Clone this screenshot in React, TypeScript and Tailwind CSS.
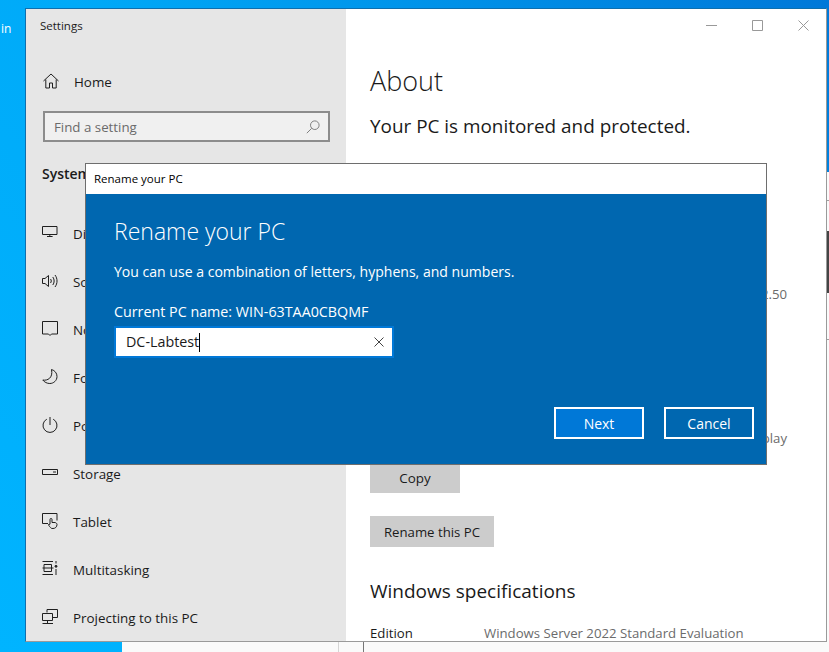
const Ico = ({ children, w = 16, h = 16 }: { children: React.ReactNode; w?: number; h?: number }) => (
  <svg width={w} height={h} viewBox="0 0 16 16" fill="none" stroke="#1f1f1f" strokeWidth="1" className="shrink-0">
    {children}
  </svg>
);

const icons: Record<string, React.ReactNode> = {
  Display: <Ico><path d="M.5 1.500h14.500v8H.5zM7.800 9.500v2M5 11.500h5.600" /></Ico>,
  Sound: <Ico><path d="M.5 5.500H3L6.500 2.500v11L3 10.500H.5zM8.500 6c1 1.200 1 2.800 0 4M10.800 4c1.800 2.400 1.800 5.600 0 8M13 2c2.700 3.600 2.700 8.400 0 12" /></Ico>,
  Notifications: <Ico><path d="M.5.500h15V13H9.500L8 14.500 6.500 13H.5z" /></Ico>,
  "Focus assist": <Ico><path d="M9.500.500c3.500 1 5.500 3.800 5.500 7 0 4-3.300 7-7.200 7-2.800 0-5.400-1.300-7-3.500 4.500 1 10.500-2 8.700-10.500z" /></Ico>,
  "Power & sleep": <Ico><path d="M8 0v8M4.800 2.200a7 7 0 1 0 6.400 0" /></Ico>,
  Storage: <Ico><path d="M.5 4.500h15v5h-15zM11 7h3" /></Ico>,
  Tablet: <Ico><path d="M6 10.500H.5V.5h14.500v7M8.500 14.500c-1-1-2-2.200-2-3l1.500-.3V6.500a1 1 0 0 1 2 0v3h3c1 .2 2 1 2 2 0 2.500-1.800 4-4 4s-2-.5-2.500-1z" /></Ico>,
  Multitasking: <Ico><path d="M.5.500h10.500M.5 13.500h10.500M2 3.500h7.500v7H2zM.5 7h11M14 0v2.500M14 8v6" /><circle cx="14" cy="5.300" r="1" fill="#1f1f1f" /></Ico>,
  "Projecting to this PC": <Ico><path d="M5 3.500v-3h10.500v8H11M.5 4.500h10v7H.5zM5.500 11.500v2.500M.5 14.500h10.500" /></Ico>,
};

const specs: [string, string][] = [
  ["Device name", "WIN-63TAA0CBQMF"],
  ["Processor", "Intel(R) Xeon(R) CPU E5-2680 v3 @ 2.50GHz   2.50"],
  ["", "GHz"],
  ["Installed RAM", "4.00 GB"],
  ["Device ID", "7C1E52A4-7B6E-4A6B-8D0B-6F11B1CE6A1C"],
  ["Product ID", "00454-40000-00001-AA081"],
  ["System type", "64-bit operating system, x64-based processor"],
  ["Pen and touch", "No pen or touch input is available for this display"],
];

export default function App() {
  return (
    <div className="relative w-[829px] h-[652px] overflow-hidden bg-[linear-gradient(50deg,#00b4ff_0%,#00aaf8_45%,#0078d8_100%)] font-['Open_Sans','Noto_Sans',sans-serif] text-[#1a1a1a]">
      <div className="absolute left-[1px] top-[21px] text-[12px] leading-4 text-white">in</div>

      {/* window behind */}
      <div className="absolute left-[122px] top-[172px] w-[800px] h-[500px] bg-[#fafafa]">
        <div className="absolute left-[216px] top-[469px] h-[20px] w-px bg-[#d5d5d5]" />
        <div className="absolute left-[241px] top-[469px] h-[20px] w-px bg-[#767676]" />
        <div className="absolute left-[704px] top-[28px] h-px w-[10px] bg-[#a0a0a0]" />
        <div className="absolute left-[704px] top-[59px] h-[62px] w-[10px] bg-[#444444]" />
        <div className="absolute left-[704px] top-[167px] h-px w-[10px] bg-[#a0a0a0]" />
      </div>

      {/* settings window */}
      <div className="absolute left-[25px] top-[8px] w-[802px] h-[634px] flex border border-[#0e6fae] border-b-[#9a9a9a] border-r-[#9a9a9a] overflow-hidden">
        <aside className="w-[320px] shrink-0 bg-[#e6e6e6] flex flex-col">
          <div className="h-[33px] pl-[14px] pt-[9px] text-[11.500px] leading-4">Settings</div>
          <div className="h-[48px] mt-[17px] flex items-center pl-[17px] gap-[15px] text-[13.400px]">
            <Ico><path d="M.5 8 8 1l7.500 7M2.800 6.500v8.500h3.700v-5h3v5h3.700V6.500" /></Ico>
            <span className="mt-[2px]">Home</span>
          </div>
          <div className="mt-[7px] ml-[17px] mr-[16px] h-[32px] border-2 border-[#8c8c8c] bg-[#f0f0f0] flex items-center justify-between pl-[9px] pr-[8px] text-[13.300px] text-[#6b6b6b]">
            <span className="mt-[2px]">Find a setting</span>
            <svg width="14" height="14" viewBox="0 0 14 14" fill="none" stroke="#808080"><circle cx="8.800" cy="5.200" r="4.300" /><path d="M5.700 8.300.8 13.200" /></svg>
          </div>
          <div className="mt-[21px] pl-[16px] h-[22px] text-[14px] leading-[22px] font-semibold">System</div>
          <nav className="mt-[24px] flex flex-col">
            {Object.keys(icons).map((k) => (
              <div key={k} className="h-[48px] shrink-0 flex items-center pl-[16px] gap-[15px] text-[13.400px]">
                {icons[k]}
                <span className="mt-[2px]">{k}</span>
              </div>
            ))}
          </nav>
        </aside>

        <main className="flex-1 min-w-0 bg-white relative pl-[24px]">
          <div className="absolute right-[17px] top-[11px] flex items-center gap-[35px]">
            <svg width="11" height="11" viewBox="0 0 11 11" stroke="#999"><path d="M0 5.500h11" /></svg>
            <svg width="11" height="11" viewBox="0 0 11 11" fill="none" stroke="#999"><path d="M.5.500h10v10H.5z" /></svg>
            <svg width="11" height="11" viewBox="0 0 11 11" stroke="#999"><path d="M.5.500l10 10M10.500.500l-10 10" /></svg>
          </div>
          <h1 className="mt-[50px] text-[27px] leading-[44px] font-light">About</h1>
          <p className="mt-[9px] text-[18.900px] leading-[28px]">Your PC is monitored and protected.</p>
          <p className="mt-[19px] text-[13.300px] leading-5 text-[#0067c0]">See details in Windows Security</p>
          <h2 className="mt-[47px] text-[19px] leading-[28px]">Device specifications</h2>
          <div className="mt-[4px] flex flex-col text-[13.200px]">
            {specs.map(([a, b], i) => (
              <div key={i} className="h-[24px] flex leading-[24px] whitespace-nowrap">
                <span className="w-[114px] shrink-0">{a}</span>
                <span className={i === 1 || i === 7 ? "w-[303px] flex justify-end text-[#6b6b6b]" : "text-[#6b6b6b]"}>{b}</span>
              </div>
            ))}
          </div>
          <button className="mt-[11px] block w-[90px] h-[32px] pt-[2px] bg-[#cccccc] text-[13.400px]">Copy</button>
          <button className="mt-[23px] block w-[124px] h-[31px] pt-[2px] bg-[#cccccc] text-[13.200px]">Rename this PC</button>
          <h2 className="mt-[30px] text-[19px] leading-[28px]">Windows specifications</h2>
          <div className="mt-[18px] flex text-[13.200px] leading-5">
            <span className="w-[114px]">Edition</span>
            <span className="text-[#6b6b6b]">Windows Server 2022 Standard Evaluation</span>
          </div>
        </main>
      </div>

      {/* rename dialog */}
      <div className="absolute left-[85px] top-[163px] w-[682px] h-[302px] border border-[#6e6e6e] flex flex-col">
        <div className="h-[30px] shrink-0 bg-white pl-[8px] text-[11.500px] leading-[30px] text-black">Rename your PC</div>
        <div className="flex-1 bg-[#0067b0] text-white pl-[28px] pr-[12px] pt-[17px] flex flex-col">
          <h2 className="text-[23px] leading-[40px] font-light">Rename your PC</h2>
          <p className="mt-[11px] text-[14.050px] leading-5">You can use a combination of letters, hyphens, and numbers.</p>
          <p className="mt-[20px] text-[14.300px] leading-5">Current PC name: WIN-63TAA0CBQMF</p>
          <div className="mt-[4px] w-[280px] h-[32px] bg-white border-2 border-[#0078d7] flex items-center pl-[10px] pr-[8px] text-[14.300px] text-[#1a1a1a]">
            <span>DC-Labtest</span>
            <span className="w-px h-[19px] bg-black" />
            <svg className="ml-auto" width="10" height="10" viewBox="0 0 10 10" stroke="#444"><path d="M.5.500l9 9M9.500.500l-9 9" /></svg>
          </div>
          <div className="mt-[49px] flex justify-end gap-[20px]">
            <button className="w-[90px] h-[32px] border-2 border-white bg-[#0078d7] text-[14px]">Next</button>
            <button className="w-[90px] h-[32px] border-2 border-white text-[14px]">Cancel</button>
          </div>
        </div>
      </div>
    </div>
  );
}
